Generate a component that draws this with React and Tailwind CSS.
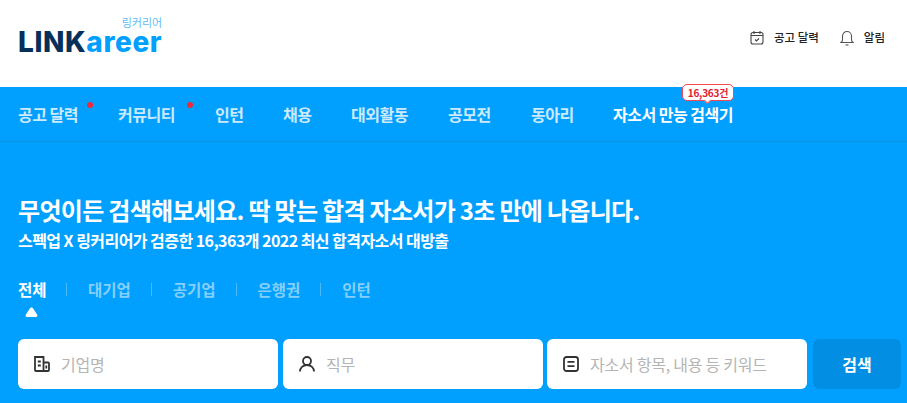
const font = { fontFamily: '"Noto Sans CJK KR", "Noto Sans", sans-serif' };

const navItems = [
  { label: "공고 달력", dot: true, width: "w-[100px]" },
  { label: "커뮤니티", dot: true, width: "w-[97px]" },
  { label: "인턴", width: "w-[68px]" },
  { label: "채용", width: "w-[68px]" },
  { label: "대외활동", width: "w-[97px]" },
  { label: "공모전", width: "w-[83px]" },
  { label: "동아리", width: "w-[82px]" },
];

const tabs = ["대기업", "공기업", "은행권", "인턴"];

const CalendarIcon = () => (
  <svg width="14" height="15" viewBox="0 0 14 15" fill="none" stroke="#444" strokeWidth="1.1">
    <rect x="1" y="2.5" width="12" height="11.5" rx="2" />
    <path d="M1 5.5h12M4 1v3M10 1v3M5 9.5l1.500 1.500L9 8.500" />
  </svg>
);

const BellIcon = () => (
  <svg width="14" height="16" viewBox="0 0 14 16" fill="none" stroke="#555" strokeWidth="1.1">
    <path d="M1 12.5c1-.8 1.500-1.600 1.500-3V6a4.500 4.500 0 0 1 9 0v3.500c0 1.400.5 2.200 1.500 3z" />
    <path d="M5.500 15h3" />
  </svg>
);

const CompanyIcon = () => (
  <svg width="16" height="16" viewBox="0 0 16 16" fill="none" stroke="#333" strokeWidth="1.800">
    <path d="M1 1h8.500v14H2a1 1 0 0 1-1-1z" />
    <path d="M9.500 6.500H14a1 1 0 0 1 1 1V14a1 1 0 0 1-1 1H9.500M3.800 5.500h3M3.800 9.500h3M12.300 9.500v3" />
  </svg>
);

const PersonIcon = () => (
  <svg width="16" height="16" viewBox="0 0 16 16" fill="none" stroke="#333" strokeWidth="1.800">
    <circle cx="8" cy="5" r="4" />
    <path d="M1 15.500c0-3.500 3-6.500 7-6.500s7 3 7 6.500" />
  </svg>
);

const DocIcon = () => (
  <svg width="16" height="16" viewBox="0 0 16 16" fill="none" stroke="#333" strokeWidth="1.800">
    <rect x="1" y="1" width="14" height="14" rx="2.500" />
    <path d="M4.500 5.800h7M4.500 10.200h7" />
  </svg>
);

const SearchField = ({ icon, placeholder, className }) => (
  <div className={`flex h-[50px] flex-none items-center rounded-md bg-white pl-4 ${className}`}>
    {icon}
    <span className="ml-[11px] text-[16px] tracking-[-0.25px] text-[#b4b4b4]">{placeholder}</span>
  </div>
);

const App = () => {
  return (
    <div className="h-[403px] w-[907px] overflow-hidden bg-[#01a0ff]" style={font}>
      <header className="flex h-[87px] items-start justify-between bg-white pl-[18px] pr-[22px]">
        <div className="mt-[16px] flex flex-col items-end">
          <span className="text-[11px] leading-[12px] text-[#5fbcf5]">링커리어</span>
          <div className="mt-[2px] text-[28px] leading-[24px] tracking-[0.6px]" style={{ fontFamily: '"Inter", sans-serif', fontWeight: 800 }}>
            <span className="text-[#05305a]">LINK</span>
            <span className="text-[#01a0ff]">areer</span>
          </div>
        </div>
        <div className="mt-[29px] flex items-center text-[11.5px] font-medium text-[#222]">
          <CalendarIcon />
          <span className="ml-[10px]">공고 달력</span>
          <span className="ml-[21px]"><BellIcon /></span>
          <span className="ml-[10px]">알림</span>
        </div>
      </header>

      <nav className="flex h-[55px] items-center border-b border-[#0e93e4] pl-[18px] text-[16px] font-bold tracking-[-0.5px] text-[#cdeafd]">
        {navItems.map((item) => (
          <div key={item.label} className={`relative ${item.width}`}>
            <span>{item.label}</span>
            {item.dot && <span className="absolute top-0 left-[69px] h-[6px] w-[6px] rounded-full bg-[#f02a3a]" />}
          </div>
        ))}
        <div className="relative font-bold text-white">
          자소서 만능 검색기
          <span className="absolute -top-[18px] left-[69px] flex h-[17px] w-[52px] items-center justify-center rounded-[5px] border border-[#f04a55] bg-white text-[10px] leading-none font-bold tracking-[-0.2px] text-[#e0222f]">
            16,363건
            <span className="absolute -bottom-[3px] left-[22px] h-[5px] w-[5px] rotate-45 border-r border-b border-[#f04a55] bg-white" />
          </span>
        </div>
      </nav>

      <section className="pr-[6px] pl-[18px] pt-[51px]">
        <h1 className="text-[24px] leading-[34px] font-bold tracking-[-0.7px] text-white">
          무엇이든 검색해보세요. 딱 맞는 합격 자소서가 3초 만에 나옵니다.
        </h1>
        <p className="mt-[2px] text-[16px] leading-[22px] font-bold tracking-[-0.55px] text-white">
          스펙업 X 링커리어가 검증한 16,363개 2022 최신 합격자소서 대방출
        </p>

        <div className="mt-[27px] flex items-center text-[15.5px] leading-[22px] font-bold text-[#86cffb]">
          <span className="relative w-[28px] whitespace-nowrap text-white">
            전체
            <svg className="absolute top-[29px] left-[7px]" width="13" height="11" viewBox="0 0 13 11" fill="#fff">
              <path d="M6.500 0.500c.8 0 1.300.5 1.800 1.200l3.800 5.800c.7 1.100.2 2.500-1.200 2.500H2.100C.7 10 .2 8.600.9 7.500l3.800-5.800C5.200 1 5.700.5 6.500.5z" />
            </svg>
          </span>
          {tabs.map((tab) => (
            <div key={tab} className="flex items-center">
              <span className="mr-[21px] ml-[20px] h-[13px] w-[1px] bg-[#4bbaf9]" />
              <span>{tab}</span>
            </div>
          ))}
        </div>

        <div className="mt-[39px] flex">
          <SearchField className="w-[260px]" icon={<CompanyIcon />} placeholder="기업명" />
          <SearchField className="ml-[5px] w-[260px]" icon={<PersonIcon />} placeholder="직무" />
          <SearchField className="ml-[4px] w-[260px]" icon={<DocIcon />} placeholder="자소서 항목, 내용 등 키워드" />
          <button className="ml-[6px] flex h-[50px] w-[88px] flex-none items-center justify-center rounded-md bg-[#028fe3] text-[16px] font-bold text-white">
            검색
          </button>
        </div>
      </section>
    </div>
  );
};

export default App;
